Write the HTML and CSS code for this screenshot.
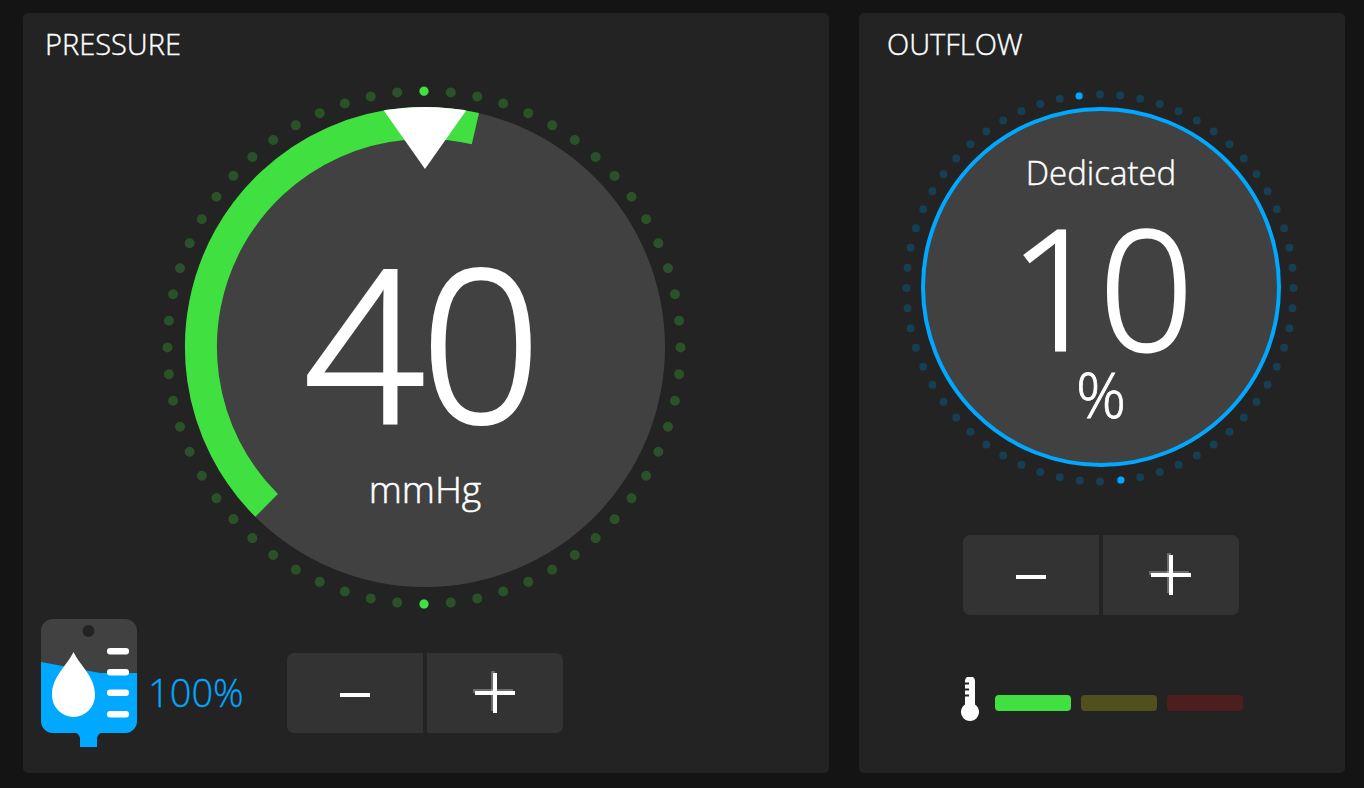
FILE: index.html
```html
<!DOCTYPE html>
<html lang="en">
<head>
<meta charset="utf-8">
<title>Pressure and outflow</title>
<link rel="stylesheet" href="styles.css">
</head>
<body>
<main class="board">
  <section class="panel panel-pressure">
    <h2 class="panel-title">PRESSURE</h2>
    <div class="gauge gauge-pressure">
      <svg class="gauge-art" viewBox="0 0 544 544" width="544" height="544" aria-hidden="true">
        <defs><clipPath id="disc"><circle cx="272" cy="272" r="240"/></clipPath></defs>
        <circle class="dots-green" cx="271" cy="272.500" r="256.500" pathLength="60"/>
        <circle class="dot-green" cx="271" cy="16.300" r="4.500"/>
        <circle class="dot-green" cx="271" cy="529" r="4.500"/>
        <circle class="disc" cx="272" cy="272" r="240"/>
        <path class="arc" d="M113.600 430.400A224 224 0 0 1 322.400 53.700"/>
        <polygon class="pointer" points="272,94 215,13 329,13" clip-path="url(#disc)"/>
      </svg>
      <div class="readout readout-pressure">
        <span class="value value-pressure">40</span>
        <span class="unit-pressure">mmHg</span>
      </div>
    </div>
    <div class="controls controls-pressure">
      <div class="bag-level">
        <svg class="bag" viewBox="0 0 96 128" width="96" height="128" aria-hidden="true">
          <rect class="bag-body" width="96" height="114" rx="12"/>
          <path class="bag-fill" d="M0 43L59 54H96V102A12 12 0 0 1 84 114H60Q57 115 56 119V128H39V119Q38 115 35 114H12A12 12 0 0 1 0 102Z"/>
          <circle class="bag-hole" cx="47.500" cy="12" r="6"/>
          <path class="bag-drop" d="M32.500 33C26 47 11 57 11 76A21.500 22 0 0 0 54 76C54 57 39 47 32.500 33Z"/>
          <rect class="bag-tick" x="66" y="29" width="22" height="6.500" rx="3"/>
          <rect class="bag-tick" x="66" y="50" width="22" height="6.500" rx="3"/>
          <rect class="bag-tick" x="66" y="70.500" width="22" height="6.500" rx="3"/>
          <rect class="bag-tick" x="66" y="92" width="22" height="6.500" rx="3"/>
        </svg>
        <span class="level">100%</span>
      </div>
      <div class="stepper">
        <button class="step" type="button" aria-label="minus"><span class="minus"></span></button>
        <button class="step" type="button" aria-label="plus"><span class="plus"></span></button>
      </div>
    </div>
  </section>
  <section class="panel panel-outflow">
    <h2 class="panel-title">OUTFLOW</h2>
    <div class="gauge gauge-outflow">
      <svg class="gauge-art" viewBox="0 0 400 400" width="400" height="400" aria-hidden="true">
        <circle class="dots-blue" cx="199" cy="201" r="193.500" pathLength="60"/>
        <circle class="dot-blue" cx="178" cy="9" r="3.500"/>
        <circle class="dot-blue" cx="220" cy="393" r="3.500"/>
        <circle class="ring" cx="200" cy="200" r="178"/>
      </svg>
      <div class="readout readout-outflow">
        <span class="mode">Dedicated</span>
        <span class="value value-outflow">10</span>
        <span class="unit-outflow">%</span>
      </div>
    </div>
    <div class="stepper stepper-outflow">
      <button class="step" type="button" aria-label="minus"><span class="minus"></span></button>
      <button class="step" type="button" aria-label="plus"><span class="plus"></span></button>
    </div>
    <div class="temperature">
      <svg class="thermo" viewBox="0 0 18 44" width="18" height="44" aria-hidden="true">
        <path class="thermo-shape" d="M4 4a5 5 0 0 1 10 0V27.500a9 9 0 1 1-10 0Z"/>
        <path class="thermo-notch" d="M4 6.500h4M4 12.500h4M4 18.500h4"/>
      </svg>
      <div class="bars">
        <span class="bar bar-green"></span>
        <span class="bar bar-yellow"></span>
        <span class="bar bar-red"></span>
      </div>
    </div>
  </section>
</main>
</body>
</html>
```
FILE: styles.css
```css
* { box-sizing: border-box; }
html, body { margin: 0; height: 100%; }
body {
  background: #141414;
  color: #fff;
  font-family: "Open Sans", "Noto Sans", "Liberation Sans", sans-serif;
  font-weight: 300;
  overflow: hidden;
}
.board {
  display: flex;
  gap: 30px;
  padding: 13px 19px 15px 23px;
  height: 788px;
}
.panel {
  position: relative;
  background: #232323;
  border-radius: 5px;
  display: flex;
  flex-direction: column;
  height: 760px;
}
.panel-pressure { width: 806px; }
.panel-outflow { width: 486px; align-items: center; }
.panel-title {
  align-self: flex-start;
  margin: 0;
  padding: 12px 0 0 22px;
  font-size: 29px;
  line-height: 38px;
  font-weight: 300;
  height: 50px;
  -webkit-text-stroke: 0.4px #fff;
}
.panel-outflow .panel-title { padding-left: 28px; }
.gauge { position: relative; flex: none; }
.gauge-art { display: block; }
.gauge-pressure { width: 544px; height: 544px; margin: 12px 0 0 130px; }
.gauge-outflow { width: 400px; height: 400px; margin: 24px 0 0 -2px; }
.dots-green, .dots-blue {
  fill: none;
  stroke-linecap: round;
  stroke-dasharray: 0 1;
}
.dots-green { stroke: #295228; stroke-width: 10; }
.dots-blue { stroke: #153f54; stroke-width: 8; }
.dot-green { fill: #3fe040; }
.dot-blue { fill: #00a8ff; }
.disc { fill: #414141; }
.arc { fill: none; stroke: #3fe040; stroke-width: 32; }
.pointer { fill: #fff; }
.ring { fill: #414141; stroke: #00a8ff; stroke-width: 4; }
.readout {
  position: absolute;
  inset: 0;
  display: flex;
  flex-direction: column;
  align-items: center;
}
.value { display: block; }
.value-pressure {
  font-size: 210px;
  line-height: 170px;
  margin: 181px 0 0 -8px;
  letter-spacing: -3px;
  -webkit-text-stroke: 4px #fff;
}
.unit-pressure { font-size: 37.500px; line-height: 44px; margin-top: 41px; -webkit-text-stroke: 0.5px #fff; }
.mode { font-size: 33px; line-height: 40px; margin-top: 66px; -webkit-text-stroke: 0.4px #fff; }
.value-outflow {
  font-size: 166px;
  line-height: 140px;
  margin: 23px 0 0 -4px;
  letter-spacing: -5px;
  -webkit-text-stroke: 3px #fff;
}
.unit-outflow { font-size: 62px; line-height: 50px; margin-top: 13px; -webkit-text-stroke: 0.8px #fff; }
.controls-pressure {
  display: flex;
  align-items: flex-start;
  margin-top: 0;
  padding-left: 18px;
}
.bag-level { display: flex; align-items: center; width: 246px; height: 128px; }
.bag { flex: none; }
.bag-body { fill: #414141; }
.bag-fill { fill: #00a8ff; }
.bag-hole { fill: #232323; }
.bag-drop, .bag-tick { fill: #fff; }
.level {
  color: #00a8ff;
  font-size: 38px;
  line-height: 48px;
  margin: 18px 0 0 11px;
  -webkit-text-stroke: 0.3px #00a8ff;
}
.stepper {
  display: flex;
  gap: 4px;
  margin-top: 34px;
}
.stepper-outflow { margin: 48px 0 0 -2px; }
.step {
  width: 136px;
  height: 80px;
  border: 0;
  padding: 0;
  background: #333;
  display: flex;
  align-items: center;
  justify-content: center;
}
.step:first-child { border-radius: 7px 0 0 7px; }
.step:last-child { border-radius: 0 7px 7px 0; }
.minus { display: block; width: 30px; height: 4px; margin-top: 4px; background: #fff; }
.plus {
  position: relative;
  display: block;
  width: 40px;
  height: 40px;
}
.plus::before, .plus::after {
  content: "";
  position: absolute;
  background: #fff;
  box-shadow: -2px -2px 0 rgba(255, 255, 255, 0.28);
}
.plus::before { left: 0; right: 0; top: 18px; height: 4px; }
.plus::after { top: 0; bottom: 0; left: 18px; width: 4px; }
.temperature {
  display: flex;
  align-items: center;
  gap: 16px;
  margin: 70px 0 0 -1px;
}
.thermo { flex: none; margin-top: -8px; }
.thermo-shape { fill: #fff; }
.thermo-notch { stroke: #232323; stroke-width: 2; fill: none; }
.bars { display: flex; gap: 10px; }
.bar { display: block; width: 76px; height: 16px; border-radius: 4px; }
.bar-green { background: #3fe040; }
.bar-yellow { background: #50501e; }
.bar-red { background: #4e1e1e; }
```
